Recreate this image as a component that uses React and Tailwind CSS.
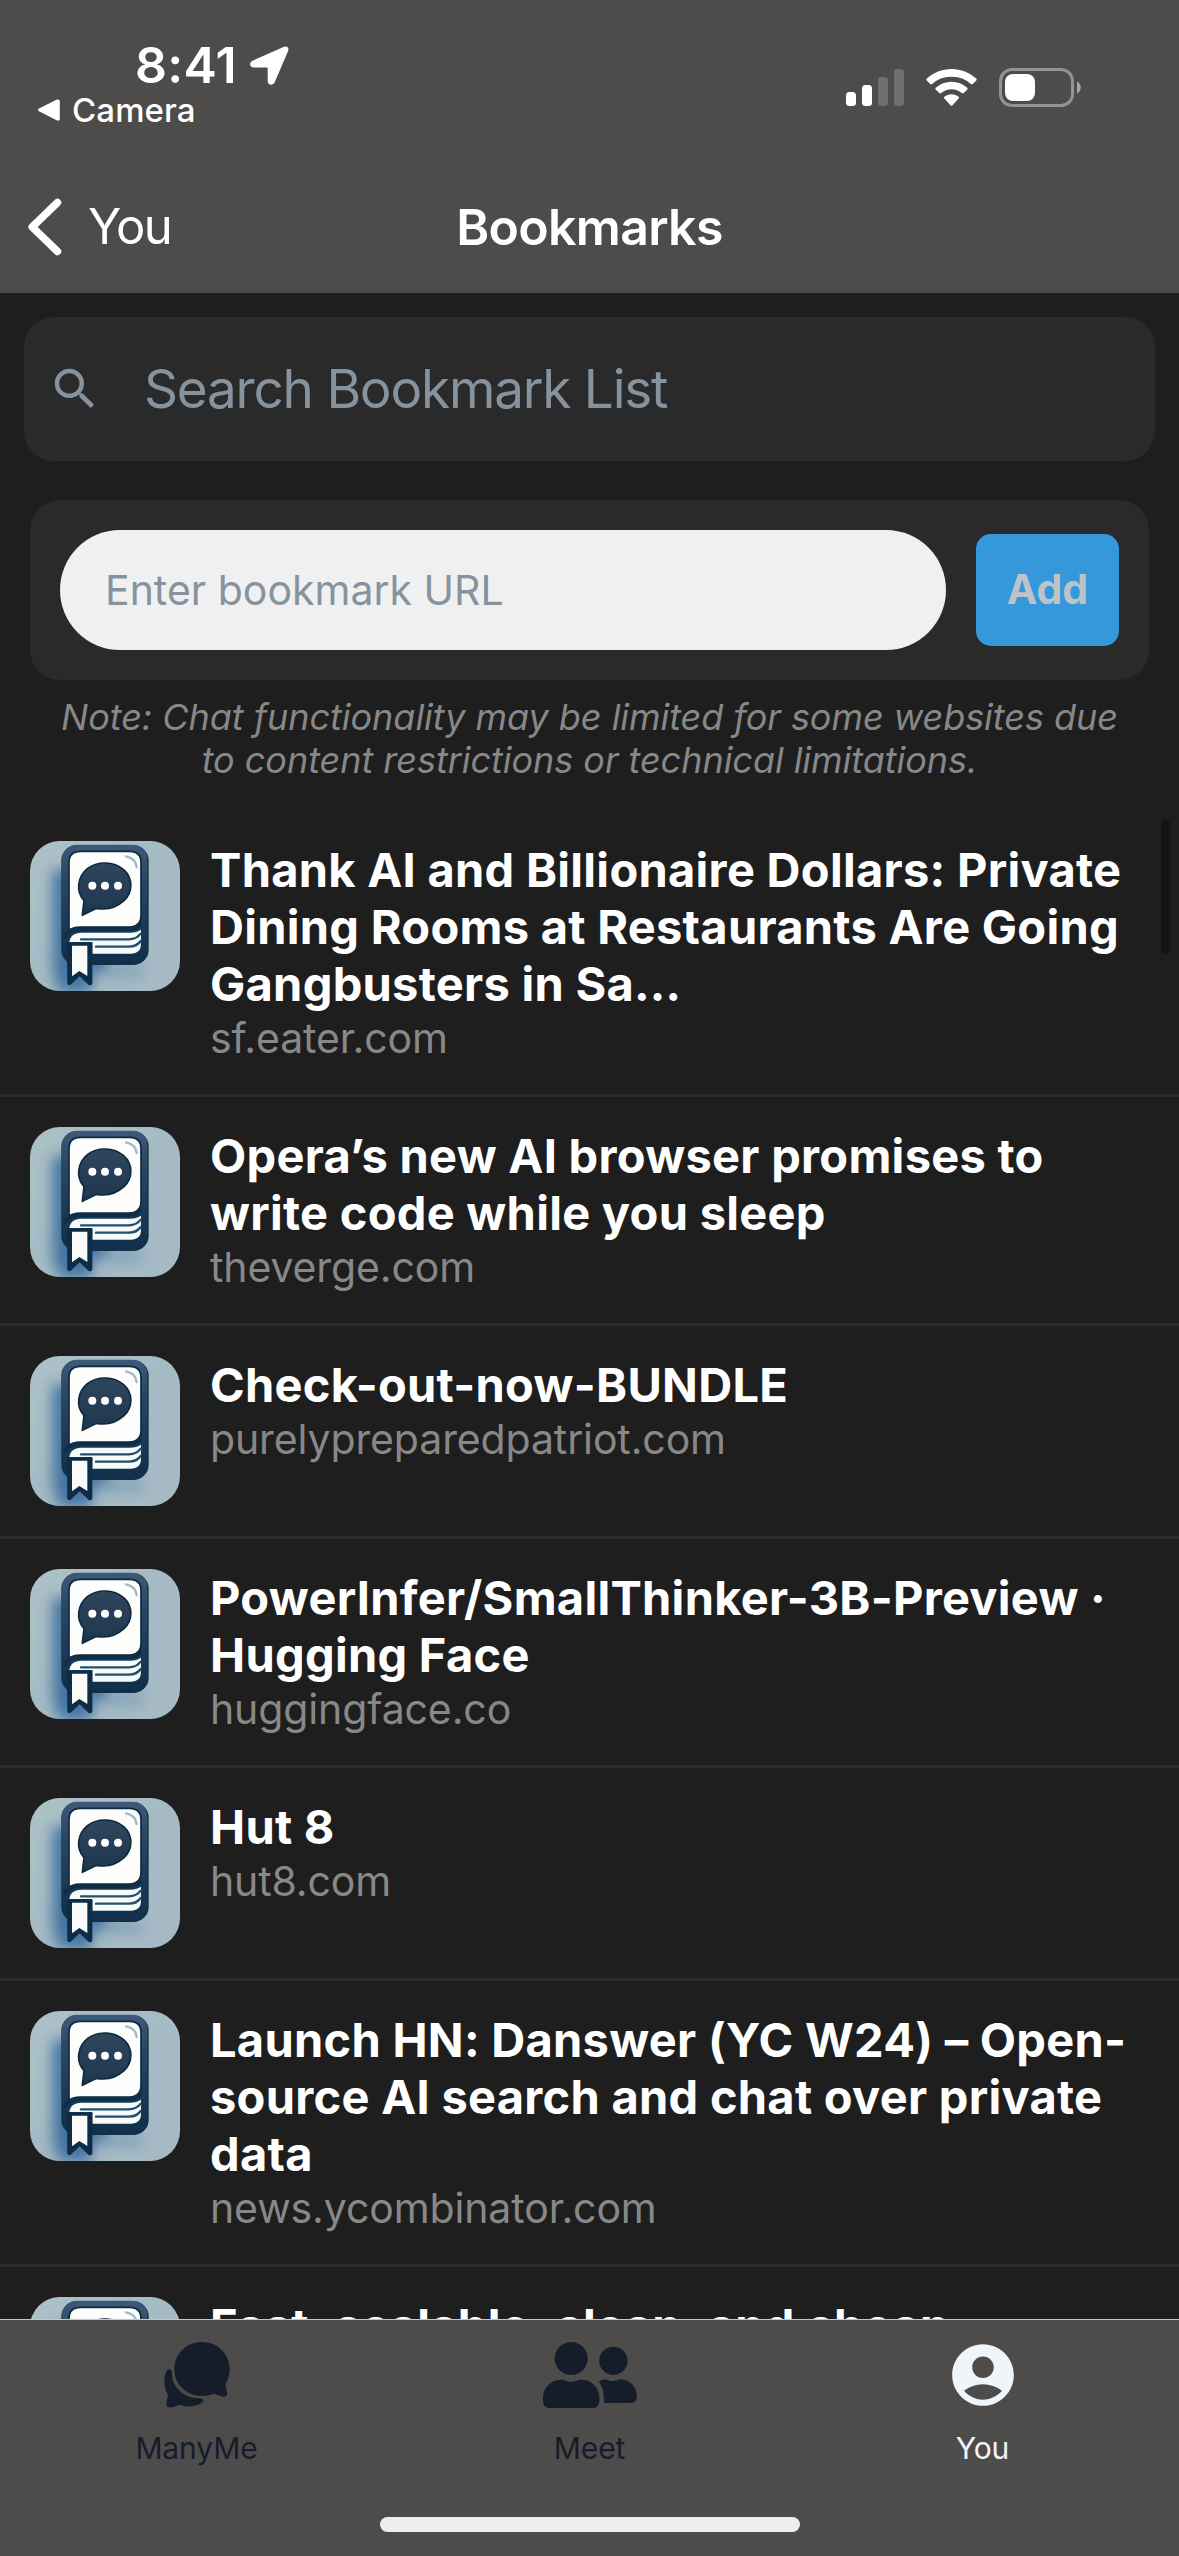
import React from 'react';
import { MdAccountCircle, MdSearch } from 'react-icons/md';

const bookmarks = [
  {
    title: 'Thank AI and Billionaire Dollars: Private\nDining Rooms at Restaurants Are Going\nGangbusters in Sa…',
    domain: 'sf.eater.com',
  },
  { title: 'Opera’s new AI browser promises to\nwrite code while you sleep', domain: 'theverge.com' },
  { title: 'Check-out-now-BUNDLE', domain: 'purelypreparedpatriot.com' },
  { title: 'PowerInfer/SmallThinker-3B-Preview ·\nHugging Face', domain: 'huggingface.co' },
  { title: 'Hut 8', domain: 'hut8.com' },
  {
    title: 'Launch HN: Danswer (YC W24) – Open-\nsource AI search and chat over private\ndata',
    domain: 'news.ycombinator.com',
  },
  { title: 'Fast, scalable, clean, and cheap', domain: '' },
];

function StatusBar() {
  return (
    <div className="flex h-[161px] shrink-0 justify-between pt-[39px]">
      <div className="flex flex-col">
        <div className="flex h-[53px] items-center pl-[135px]">
          <span className="w-[115px] text-[50px] leading-[53px] font-semibold tracking-[0.3px]">8:41</span>
          <svg className="h-[39px] w-[39px]" viewBox="0 0 39 39" fill="currentColor">
            <path d="M3 14.500 34 .8c3-1.200 5.200 1 4.200 4L24.700 36.300c-1.500 3.700-7 3.200-7-1.300V22.500c0-.6-.3-.9-.9-.9H4c-4.600 0-5.300-5.500-1-7.100Z" />
          </svg>
        </div>
        <div className="flex h-9 items-center gap-[12px] pl-[38px]">
          <svg className="h-[22px] w-[22px]" viewBox="0 0 22 22" fill="currentColor">
            <path d="M1.500 9.200 18.500.8c2-.9 3.300-.1 3.300 1.800v16.800c0 1.900-1.300 2.700-3.300 1.800L1.500 12.600c-2-.9-2-2.500 0-3.400Z" />
          </svg>
          <span className="text-[33px] leading-9 font-medium tracking-[0.1px]">Camera</span>
        </div>
      </div>
      <div className="mt-[29px] flex h-[39px] items-center pr-[98px]">
        <svg className="h-[37px] w-[58px]" viewBox="0 0 58 37" fill="currentColor">
          <rect x="0" y="23" width="10" height="14" rx="3.5" />
          <rect x="16" y="16" width="10" height="21" rx="3.5" />
          <rect x="32" y="8" width="10" height="29" rx="3" opacity=".2" />
          <rect x="48" y="0" width="10" height="37" rx="3" opacity=".2" />
        </svg>
        <svg className="ml-[22px] h-[37px] w-[51px]" viewBox="0 0 51 37" fill="currentColor">
          <path d="M25.500 0C35 0 43.600 3.600 50.200 9.600c.6.600.6 1.300.1 1.900l-3.500 3.400c-.6.600-1.300.600-1.900 0A28.300 28.300 0 0 0 25.500 7.700 28.300 28.300 0 0 0 6.100 14.900c-.6.600-1.300.600-1.900 0L.7 11.500c-.5-.6-.5-1.300.1-1.900C7.400 3.600 16 0 25.500 0Z" />
          <path d="M25.500 12.800c6 0 11.400 2.200 15.700 5.900.6.600.6 1.200.1 1.800l-3.600 3.500c-.6.600-1.200.600-1.800.1a15.900 15.900 0 0 0-20.800 0c-.6.500-1.200.500-1.800-.1l-3.600-3.500c-.5-.6-.5-1.200.1-1.800 4.300-3.700 9.700-5.900 15.700-5.900Z" />
          <path d="M25.500 25.300c2.800 0 5.200 1 7.100 2.400.6.500.6 1.200.1 1.800l-6.200 6.800c-.6.600-1.400.600-2 0l-6.200-6.800c-.5-.6-.5-1.300.1-1.800 1.900-1.400 4.300-2.400 7.100-2.400Z" />
        </svg>
        <svg className="ml-[22px] h-[39px] w-[82px]" viewBox="0 0 82 39" fill="currentColor">
          <rect x="1.5" y="1.5" width="72" height="36" rx="11.5" fill="none" stroke="currentColor" strokeWidth="3" opacity=".4" />
          <rect x="6" y="6" width="30" height="27" rx="8" />
          <path d="M78 13.500c5 2 5 10 0 12Z" opacity=".5" />
        </svg>
      </div>
    </div>
  );
}

function NavBar() {
  return (
    <div className="grid h-[132px] grid-cols-[1fr_auto_1fr] items-center">
      <div className="flex items-center pl-[28px]">
        <svg className="h-[58px] w-[34px]" viewBox="0 0 34 58" fill="none" stroke="currentColor" strokeWidth="7.5" strokeLinecap="round" strokeLinejoin="round">
          <path d="M29.500 4.500 4.200 29l25.300 24.500" />
        </svg>
        <span className="ml-[26px] text-[49px] leading-[60px] tracking-[-1.6px]">You</span>
      </div>
      <h1 className="text-[50px] leading-[60px] font-semibold tracking-[-0.7px]">Bookmarks</h1>
      <div />
    </div>
  );
}

function BookIcon() {
  return (
    <svg className="h-[150px] w-[150px] shrink-0 rounded-[30px]" viewBox="30 33 450 450">
      <defs>
        <linearGradient id="sky" x1="0" y1="0" x2="1" y2="1">
          <stop offset="0" stopColor="#adc1c7" />
          <stop offset=".5" stopColor="#a5bbc4" />
          <stop offset="1" stopColor="#a6bac4" />
        </linearGradient>
        <linearGradient id="cover" x1="0" y1="0" x2="0" y2="1">
          <stop offset="0" stopColor="#3d5a78" />
          <stop offset=".3" stopColor="#2a4662" />
          <stop offset="1" stopColor="#10304c" />
        </linearGradient>
        <linearGradient id="bubble" x1="0" y1="0" x2="0" y2="1">
          <stop offset="0" stopColor="#2f465d" />
          <stop offset="1" stopColor="#1e374e" />
        </linearGradient>
        <filter id="soft" x="-50%" y="-50%" width="200%" height="200%">
          <feGaussianBlur stdDeviation="20" />
        </filter>
      </defs>
      <rect x="30" y="33" width="450" height="450" fill="url(#sky)" />
      <path d="M98 120h160v295h107v12H215v60h-95l-22-60z" fill="#2a6299" opacity=".8" filter="url(#soft)" />
      <rect x="124" y="46" width="262" height="359" rx="46" fill="#12304a" />
      <rect x="126" y="44" width="256" height="346" rx="44" fill="url(#cover)" />
      <path d="M147 300V98q0-34 34-34h148q34 0 34 34v157q0 36-36 36H180q-22 0-33 10Z" fill="#fdfdfb" stroke="#0c2a42" strokeWidth="5" />
      <path d="M318 79c18 3 30 14 32 32" fill="none" stroke="#9fb9ca" strokeWidth="7" strokeLinecap="round" />
      <path d="M148 336c2-18 14-27 36-28h145c15 0 25-3 34-9v43c0 20-12 29-30 29H217v-35Z" fill="#f6faf9" />
      <path d="M183 328h143q24 0 36-17M228 350h98q25 0 36-17" fill="none" stroke="#244f6d" strokeWidth="7" strokeLinecap="round" />
      <path d="M133 322c8-18 24-25 50-25h140c20 0 31-4 40-16" fill="none" stroke="#0e2d47" strokeWidth="11" />
      <path d="M141 338h76v118q0 14-12 8l-26-25-27 25q-12 5-10-10Z" fill="#0d2c46" />
      <path d="M156 347h46v91l-24-15-22 16Z" fill="#fafaf8" />
      <path d="M187 256 192 212C166 183 173 140 202 116c32-24 79-22 109 3 29 26 28 67 1 93-22 20-50 29-82 23Z" fill="url(#bubble)" stroke="#0c2940" strokeWidth="5" strokeLinejoin="round" />
      <circle cx="217" cy="167" r="12" fill="#fff" />
      <circle cx="255" cy="167" r="12" fill="#fff" />
      <circle cx="294" cy="167" r="12" fill="#fff" />
    </svg>
  );
}

function BookmarkRow({ data }) {
  return (
    <li className="flex gap-[30px] border-b-[3px] border-[#2b2b2b] py-[30px] pl-[30px]">
      <BookIcon />
      <div className="min-w-0 flex-1">
        <h2 className="text-[47px] leading-[57px] font-bold tracking-[0.28px] whitespace-pre text-white">{data.title}</h2>
        {data.domain && (
          <p className="pt-px text-[41px] leading-[51px] tracking-[-0.12px] text-[#888888]">{data.domain}</p>
        )}
      </div>
    </li>
  );
}

function TabBar() {
  return (
    <nav className="flex h-[237px] shrink-0 flex-col items-center border-t border-[#c9c8c6] bg-[#4d4c4a]">
      <div className="grid w-full flex-1 grid-cols-3 text-[#161d2a]">
        <div className="flex flex-col items-center pt-[22px]">
          <svg className="h-[66px] w-[66px]" viewBox="131 95 198 198" fill="currentColor">
            <path d="M245 95c47 0 83 36 83 82 0 15-4 29-12 42-2 8 3 20 5 30 1 7-4 10-11 10-10-1-20-7-29-9-11 4-23 7-36 7-47 0-83-34-83-80 0-46 36-82 83-82Z" />
            <path d="M150 177c7 2 3 20 9 37 13 32 44 49 79 50 13 1 14 9 5 15-18 11-43 12-65 4-10 3-22 9-32 8-8-1-9-7-7-15 1-9 3-17 4-22-14-24-15-56-2-75 2-2 5-3 9-2Z" />
          </svg>
          <span className="mt-[22px] text-[30px] leading-[36px] tracking-[-0.1px]">ManyMe</span>
        </div>
        <div className="flex flex-col items-center pt-[22px]">
          <svg className="h-[66px] w-[94px]" viewBox="69 66 282 198" fill="currentColor">
            <circle cx="153.5" cy="115.5" r="49.5" />
            <circle cx="280" cy="122.5" r="42.5" />
            <path d="M120 179c13-2 18 7 33 7s22-9 34-7c28 1 51 24 51 53v10q0 22-22 22H91q-22 0-22-22v-10c0-29 23-51 51-53Z" />
            <path d="M236 185c8-6 18-8 26-5 6 2 10 3 18 3 10 0 13-5 23-5 27 1 48 24 48 52q-1 19-20 19h-79c0-26-2-48-16-64Z" />
          </svg>
          <span className="mt-[22px] text-[30px] leading-[36px] tracking-[-0.1px]">Meet</span>
        </div>
        <div className="flex flex-col items-center pt-[18px] text-[#f0f5fa]">
          <MdAccountCircle className="h-[74px] w-[74px]" />
          <span className="mt-[18px] text-[30px] leading-[36px] tracking-[-0.1px]">You</span>
        </div>
      </div>
      <div className="mb-[24px] h-[15px] w-[420px] rounded-full bg-[#eeeeee]" />
    </nav>
  );
}

export default function App() {
  return (
    <div className="flex h-[2556px] w-[1179px] flex-col overflow-hidden bg-[#1e1e1e] font-['Inter',sans-serif] text-white">
      <header className="h-[293px] shrink-0 bg-[#4d4c4a]">
        <StatusBar />
        <NavBar />
      </header>

      <main className="flex min-h-0 flex-1 flex-col">
        <div className="mx-[24px] mt-[24px] flex h-[144px] shrink-0 items-center rounded-[30px] bg-[#2a2a2a] pl-[24px] text-[#86939e]">
          <MdSearch className="h-[54px] w-[54px]" />
          <span className="ml-[42px] text-[53px] leading-[64px] tracking-[-1.2px]">Search Bookmark List</span>
        </div>

        <div className="mx-[30px] mt-[39px] flex h-[180px] shrink-0 items-center gap-[30px] rounded-[30px] bg-[#2a2a2a] p-[30px]">
          <div className="flex h-[120px] flex-1 items-center rounded-full bg-[#f0f0f0] pt-[2px] pl-[45px] text-[41px] text-[#86939e]">
            Enter bookmark URL
          </div>
          <button className="h-[112px] w-[143px] rounded-[15px] bg-[#3498db] text-[41px] font-bold text-[#bdc3c7]">Add</button>
        </div>

        <p className="mt-[16px] h-[115px] shrink-0 text-center text-[36px] leading-[43px] tracking-[-0.04px] whitespace-pre text-[#888888] italic">
          {'Note: Chat functionality may be limited for some websites due\nto content restrictions or technical limitations.'}
        </p>

        <div className="relative min-h-0 flex-1 overflow-hidden">
          <ul>
            {bookmarks.map((item) => (
              <BookmarkRow key={item.title} data={item} />
            ))}
          </ul>
          <div className="absolute top-[9px] right-[9px] h-[134px] w-[9px] rounded-full bg-[#141414]" />
        </div>
      </main>

      <TabBar />
    </div>
  );
}
